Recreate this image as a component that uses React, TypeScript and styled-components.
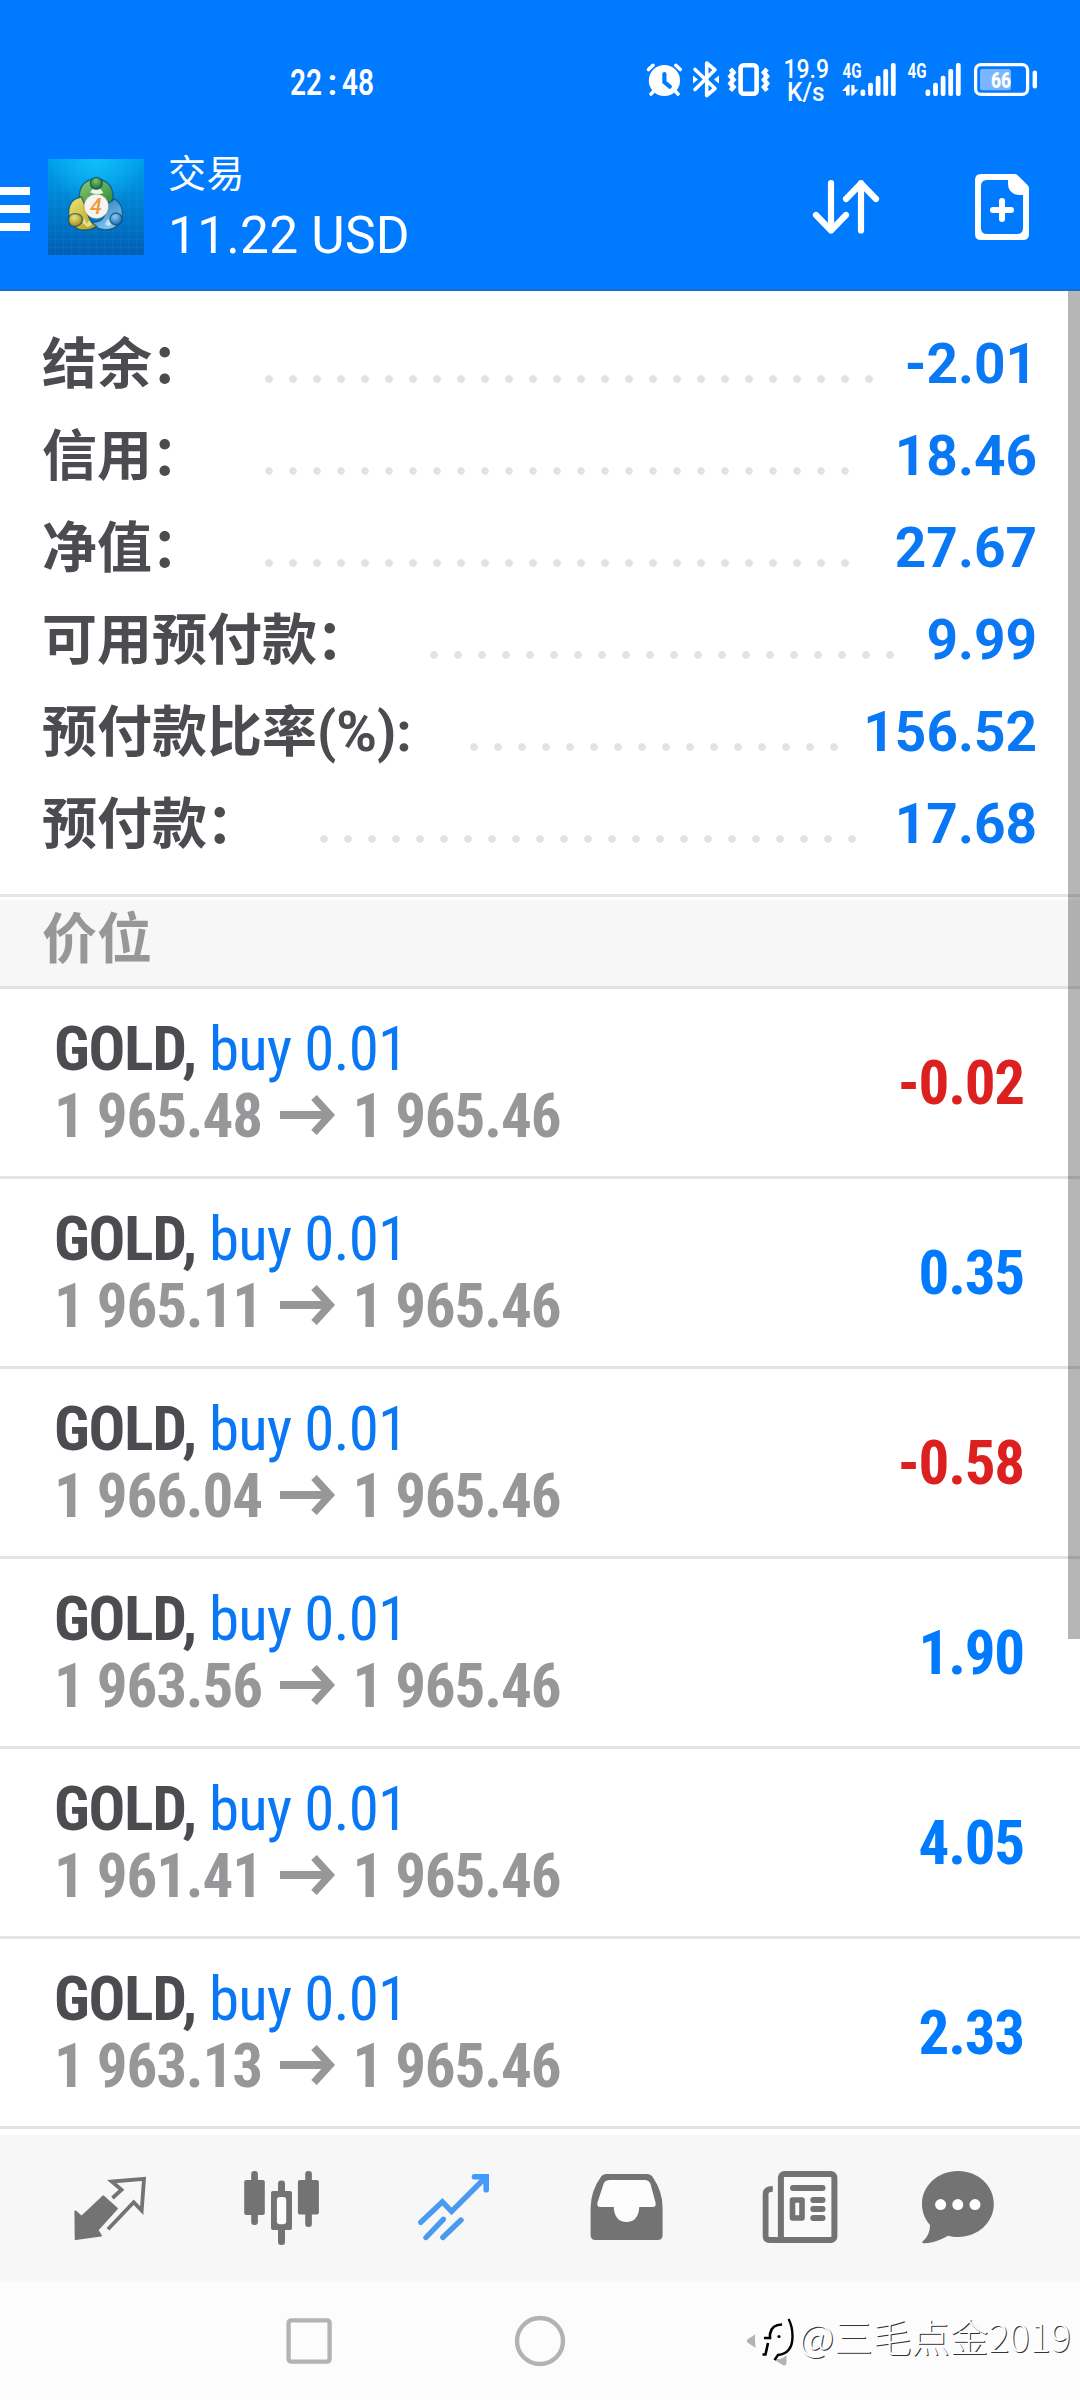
import React from 'react';
import styled, { createGlobalStyle } from 'styled-components';

const BLUE = '#007aff';
const VALUE_BLUE = '#0a78f5';
const ICON_GREY = '#737373';

const GlobalStyle = createGlobalStyle`
  *, *::before, *::after { box-sizing: border-box; }
  body {
    margin: 0;
    background: #fff;
    font-family: Roboto, 'Noto Sans CJK SC', sans-serif;
  }
  svg { display: block; flex: none; overflow: visible; }
`;

const Screen = styled.div`
  position: relative;
  display: flex;
  flex-direction: column;
  width: 1080px;
  height: 2400px;
  overflow: hidden;
  background: #fff;
`;

const TopBar = styled.header`
  flex: none;
  height: 291px;
  background: ${BLUE};
  border-bottom: 2px solid #1a6ccb;
  color: #fff;
`;

const StatusBar = styled.div`
  display: flex;
  height: 150px;
  padding: 58px 43px 0 290px;
`;

const StatusIcons = styled.div`
  display: flex;
  margin-left: auto;
`;

const Spaced = styled.div<{ $gap: number }>`
  margin-left: ${(p) => p.$gap}px;
`;

const AppBar = styled.div`
  display: flex;
  height: 139px;
`;

const MenuButton = styled.div`
  display: flex;
  flex-direction: column;
  gap: 10px;
  width: 30px;
  padding-top: 37px;
`;

const MenuLine = styled.span`
  height: 8px;
  background: #fff;
`;

const Logo = styled.div`
  margin: 9px 0 0 18px;
`;

const Titles = styled.div`
  display: flex;
  flex-direction: column;
  margin-left: 24px;
`;

const Title = styled.div`
  font-size: 38px;
  line-height: 48px;
  height: 56px;
  letter-spacing: 0.5px;
`;

const Subtitle = styled.div`
  font-size: 51.5px;
  line-height: 60px;
  letter-spacing: 0.2px;
`;

const AppActions = styled.div`
  display: flex;
  gap: 95px;
  margin: 24px 50px 0 auto;
`;

const Summary = styled.section`
  display: flex;
  flex-direction: column;
  flex: none;
  height: 606px;
  padding: 27px 43px 0 42px;
  border-bottom: 3px solid #e5e5e5;
`;

const SummaryRow = styled.div`
  display: flex;
  flex: none;
  align-items: baseline;
  height: 92px;
  font-size: 55px;
  line-height: 92px;
  font-weight: 700;
`;

const SummaryLabel = styled.span`
  color: #4b4b50;
  white-space: nowrap;
`;

const WideColon = styled.span`
  margin: 0 1px 0 -1px;
`;

const Leader = styled.span<{ $dots: number }>`
  width: ${(p) => p.$dots * 24}px;
  height: 8px;
  margin-left: 58px;
  background: radial-gradient(circle at 4px 4px, #e2e2e2 3.4px, transparent 4.2px) 0 0 / 24px 8px repeat-x;
`;

const SummaryValue = styled.span`
  margin-left: auto;
  color: ${VALUE_BLUE};
`;

const SectionHeader = styled.div`
  flex: none;
  height: 92px;
  padding-left: 42px;
  border-top: 3px solid #fff;
  border-bottom: 3px solid #e3e3e3;
  background: #f7f7f7;
  color: #97979a;
  font-size: 55px;
  line-height: 79px;
  font-weight: 700;
`;

const Deal = styled.article`
  display: flex;
  flex: none;
  justify-content: space-between;
  align-items: center;
  height: 190px;
  padding: 0 56px 0 54px;
  border-bottom: 3px solid #e3e3e3;
  font-family: 'Roboto Condensed', Roboto, sans-serif;
  font-size: 61px;
  font-stretch: 75%;
  font-weight: 700;
`;

const DealInfo = styled.div`
  display: flex;
  flex-direction: column;
  white-space: nowrap;
  letter-spacing: -1.1px;
`;

const DealLine = styled.div`
  display: flex;
  align-items: center;
  line-height: 66.5px;
  color: #97979a;
`;

const Instrument = styled.span`
  color: #4b4b50;
`;

const Side = styled.span`
  margin-left: 13px;
  color: ${VALUE_BLUE};
  font-weight: 440;
  letter-spacing: -0.9px;
`;

const Profit = styled.span<{ $loss: boolean }>`
  letter-spacing: -1.2px;
  color: ${(p) => (p.$loss ? '#dc2020' : BLUE)};
`;

const ArrowBox = styled.span`
  margin: 0 17.5px 2px 18px;
`;

const TabBar = styled.nav`
  display: flex;
  flex: none;
  height: 147px;
  margin-top: 6px;
  padding: 33px 0 0 72px;
  background: #f7f7f7;
`;

const SystemNav = styled.div`
  display: flex;
  flex: 1;
  align-items: center;
  justify-content: space-between;
  padding: 0 290px 0 284px;
  background: #fcfcfc;
`;

const ScrollThumb = styled.div`
  position: absolute;
  top: 291px;
  right: 0;
  width: 12px;
  height: 1348px;
  background: rgba(0, 0, 0, 0.285);
`;

const Watermark = styled.div`
  position: absolute;
  right: 9px;
  bottom: 33px;
  display: flex;
  align-items: center;
  gap: 3px;
  color: #fff;
  font-family: 'Noto Sans CJK SC', sans-serif;
  font-size: 38.6px;
  line-height: 56px;
  font-weight: 300;
  text-shadow: 1px 1px 0 #333;
`;

const WatermarkName = styled.span`
  padding-bottom: 4px;
`;

const Alarm = () => (
  <svg width="37" height="44" viewBox="646 58 37 44" fill="none" stroke="#fff" strokeLinecap="round">
    <circle cx="664.4" cy="80.5" r="15.6" fill="#fff" stroke="none" />
    <path d="M648.5 69.5l4.5-4.2M680.3 69.5l-4.5-4.2M655 90l-4 4M674 90l4 4" strokeWidth="3.6" />
    <path d="M664.4 74v8l5.4 4.6" stroke={BLUE} strokeWidth="4.2" />
  </svg>
);

const Bluetooth = () => (
  <svg width="28" height="44" viewBox="692 58 28 44" fill="none" stroke="#fff" strokeWidth="3.6" strokeLinecap="round" strokeLinejoin="round">
    <path d="M695 69.5L715 88.5l-8.3 7V63l8.3 6.8L695 89.5" />
    <path d="M693 75.5v8l5-4zM719 75.5v8l-5-4z" fill="#fff" stroke="none" />
  </svg>
);

const Vibrate = () => (
  <svg width="42" height="44" viewBox="728 58 42 44" fill="none" stroke="#fff">
    <rect x="740.6" y="65.2" width="16" height="28.6" rx="3" strokeWidth="4.6" />
    <path d="M730.5 69l3 3.6-3 3.6 3 3.6-3 3.6 3 3.6-3 3.6M767 69l-3 3.6 3 3.6-3 3.6 3 3.6-3 3.6 3 3.6" strokeWidth="4.6" />
  </svg>
);

const Speed = () => (
  <svg width="46" height="44" viewBox="784 58 46 44" fill="#fff" fontFamily="Roboto" fontSize="25" fontWeight="500">
    <text x="783.5" y="78" textLength="45.5" lengthAdjust="spacingAndGlyphs">19.9</text>
    <text x="787" y="100.5" textLength="37.5" lengthAdjust="spacingAndGlyphs">K/s</text>
  </svg>
);

const Signal = ({ left, active }: { left: number; active?: boolean }) => (
  <svg width="56" height="44" viewBox="0 58 56 44" fill="#fff">
    <text x={left} y="77.8" fontFamily="Roboto" fontSize="20.5" fontWeight="700" textLength="19" lengthAdjust="spacingAndGlyphs">4G</text>
    {[89.4, 82.7, 75.7, 69, 63].map((top, i) => (
      <rect key={top} x={19.5 + i * 7.6} y={top} width="4.8" height={96 - top} rx="2" />
    ))}
    {active && <path d="M5 95.5V91H1l6-6.2h1.6v10.7zM10.3 85h3.2v4.4h4.2l-5.8 6.2h-1.6z" />}
  </svg>
);

const Battery = () => (
  <svg width="63" height="44" viewBox="974 58 63 44">
    <rect x="975.6" y="64.6" width="52" height="29.8" rx="5.5" fill="none" stroke="#fff" strokeWidth="3.3" />
    <rect x="980" y="69" width="31" height="21.3" rx="2.5" fill="#7ab5ff" />
    <text x="991" y="87.7" fill="#fff" fontFamily="Roboto" fontSize="22.5" fontWeight="900" textLength="20" lengthAdjust="spacingAndGlyphs">66</text>
    <rect x="1032.6" y="70.6" width="4.4" height="17.8" rx="2" fill="#fff" />
  </svg>
);

const TerminalLogo = () => (
  <svg width="96" height="96" viewBox="0 0 288 288">
    <defs>
      <linearGradient id="sky" x1="0" y1="0" x2="0" y2="1">
        <stop offset="0" stopColor="#009fee" />
        <stop offset="0.5" stopColor="#007fce" />
        <stop offset="1" stopColor="#005fb2" />
      </linearGradient>
      <radialGradient id="glow" cx="0.5" cy="0" r="0.5">
        <stop offset="0" stopColor="#10c0fa" />
        <stop offset="1" stopColor="#10c0fa" stopOpacity="0" />
      </radialGradient>
      <linearGradient id="green" x1="0" y1="0" x2="0.6" y2="1">
        <stop offset="0" stopColor="#8fd07c" />
        <stop offset="1" stopColor="#2d8a35" />
      </linearGradient>
      <linearGradient id="yellow" x1="0" y1="0" x2="0.8" y2="1">
        <stop offset="0" stopColor="#efe67a" />
        <stop offset="1" stopColor="#b8a51c" />
      </linearGradient>
      <linearGradient id="blue" x1="0" y1="0" x2="0.5" y2="1">
        <stop offset="0" stopColor="#2272b8" />
        <stop offset="1" stopColor="#7ec8f0" />
      </linearGradient>
      <radialGradient id="greenHead" cx="0.45" cy="0.3" r="0.7">
        <stop offset="0" stopColor="#7cc46e" />
        <stop offset="1" stopColor="#1b6d27" />
      </radialGradient>
      <radialGradient id="yellowHead" cx="0.4" cy="0.3" r="0.7">
        <stop offset="0" stopColor="#f0e284" />
        <stop offset="1" stopColor="#a48d12" />
      </radialGradient>
      <radialGradient id="blueHead" cx="0.4" cy="0.3" r="0.7">
        <stop offset="0" stopColor="#8ecdf2" />
        <stop offset="1" stopColor="#1d6cb0" />
      </radialGradient>
    </defs>
    <rect width="288" height="288" fill="url(#sky)" />
    <rect width="288" height="288" fill="url(#glow)" />
    <path d="M23 0v288M47 0v288M71 0v288M96 0v288M120 0v288M145 0v288M169 0v288M193 0v288M218 0v288M242 0v288M266 0v288M0 22h288M0 46h288M0 70h288M0 95h288M0 119h288M0 143h288M0 168h288M0 192h288M0 217h288M0 241h288M0 265h288" stroke="#5fc4f5" strokeOpacity="0.16" strokeWidth="1.6" />
    <g stroke="#0b4a6c" strokeOpacity="0.7" strokeWidth="4">
      <path d="M94 112c0-34 22-52 50-52 30 0 52 22 51 52-1 24-10 36-22 42l-50-20-20 2c-6-6-9-14-9-24z" fill="url(#green)" />
      <path d="M148 188c20-4 26-24 30-54l22-14c16 10 24 26 23 46-2 28-22 46-50 46-20 0-34-8-48-20z" fill="url(#blue)" />
      <path d="M100 114c-24 4-38 22-38 48 0 32 22 52 48 51 14 0 26-4 36-11-18-10-28-30-32-56z" fill="url(#yellow)" />
      <path d="M126 100l10-12h20l10 14-20 6z" fill="#eef7e4" stroke="none" />
      <path d="M104 192l6-14 6 16 8-10 8 14-14 6zM170 196l10-16 12 14-10 8z" fill="#fff" fillOpacity="0.55" stroke="none" />
      <circle cx="145" cy="73" r="18" fill="url(#greenHead)" />
      <path d="M62 182c0-12 8-18 20-18 14 0 22 8 21 18-1 12-10 20-22 20-14 0-19-8-19-20z" fill="url(#yellowHead)" />
      <circle cx="204" cy="180" r="18" fill="url(#blueHead)" />
    </g>
    <circle cx="145" cy="142" r="37" fill="#f6f4f2" stroke="#59634b" strokeOpacity="0.6" strokeWidth="2" />
    <text x="144" y="165" textAnchor="middle" fontFamily="Roboto" fontSize="64" fontStyle="italic" fontWeight="500" fill="#f09a3e">4</text>
  </svg>
);

const SortArrows = () => (
  <svg width="66" height="66" viewBox="813 174 66 66" fill="none" stroke="#fff" strokeWidth="6.2" strokeLinecap="round" strokeLinejoin="round">
    <path d="M831 183v47.5M816 215l15 15.5L846 215M861 230.5V183M846 199l15-15.5L876 199" />
  </svg>
);

const NewOrder = () => (
  <svg width="56" height="66" viewBox="974 174 56 66" fill="#fff">
    <path fillRule="evenodd" d="M981 174h34q1.500 0 2.700 1.200l10 10q1.300 1.300 1.300 3V234q0 6-6 6h-42q-6 0-6-6v-54q0-6 6-6zM987 180q-6 0-6 6v42q0 6 6 6h30q6 0 6-6v-33h-4q-11-1-11-11v-4z" />
    <path d="M993 210h18M1002 201v18" stroke="#fff" strokeWidth="6" strokeLinecap="round" />
  </svg>
);

const PriceArrow = () => (
  <svg width="55" height="44" viewBox="0 0 55 44" fill="none" stroke="#97979a">
    <path d="M0 22h49" strokeWidth="8" />
    <path d="M34 4.5L50 22 34 39.5" strokeWidth="7.5" />
  </svg>
);

const QuotesIcon = () => (
  <svg width="75" height="80" viewBox="72 2168 75 80">
    <path d="M75.5 2211.5l6 5.5 21.8-20.5 13.5 12-19.5 21.5 3.5 5.5-25 3.5z" fill={ICON_GREY} stroke={ICON_GREY} strokeWidth="2.2" strokeLinejoin="round" />
    <path d="M112.5 2198l9-8.3-9.7-8.2 32.2-2.7-2.3 31.7-8-8.3-25.7 27" fill="none" stroke={ICON_GREY} strokeWidth="3.8" />
  </svg>
);

const CandlesIcon = () => (
  <svg width="77" height="80" viewBox="243 2168 77 80" fill={ICON_GREY}>
    <rect x="244.2" y="2180" width="20.6" height="35" rx="2" />
    <rect x="251.2" y="2171" width="6.7" height="54" rx="3" />
    <rect x="297.9" y="2180" width="21" height="34.5" rx="2" />
    <rect x="305.2" y="2171" width="6.7" height="56" rx="3" />
    <rect x="278" y="2180.6" width="7" height="64.4" rx="3" />
    <rect x="271" y="2191" width="21" height="39" rx="2" />
    <rect x="276.9" y="2197" width="9.3" height="27.3" rx="3" fill="#fcfcfc" />
  </svg>
);

const TradeIcon = () => (
  <svg width="74" height="80" viewBox="417 2168 74 80" fill="none" stroke="#4a9af0" strokeWidth="5.4" strokeLinecap="round">
    <path d="M420.8 2222.3l21.6-20.4 9.2 9.6L485 2178M443.3 2219.3L426 2237.5M461 2220l-18.2 17.5" />
    <path d="M474.5 2176.7h11.7v13" stroke="#3f9bff" strokeWidth="5.6" />
    <path d="M478 2176h10v11z" fill="#3f9bff" stroke="none" />
  </svg>
);

const HistoryIcon = () => (
  <svg width="74" height="80" viewBox="590 2168 74 80">
    <path d="M606.5 2174H647q4 0 6 3.5 9.5 14 9.6 30V2235q0 5-5 5h-62q-5 0-5-5v-27.5q.5-17 9.9-30 2-3.500 6-3.500z" fill={ICON_GREY} />
    <path d="M610 2180h34.500q4.500 0 6 4l5 18.500q1 4.500-3 4.500h-13.200q-1 15-12.800 15t-12.800-15h-13.200q-4 0-3-4.500l6-18.500q1.500-4 6.500-4z" fill="#fcfcfc" />
  </svg>
);

const NewsIcon = () => (
  <svg width="76" height="80" viewBox="762 2168 76 80" fill="none" stroke={ICON_GREY}>
    <rect x="780.9" y="2174" width="53.5" height="66" rx="3.5" fill="#fafafa" strokeWidth="6" />
    <path d="M772.8 2188.8q-7.2 0-7.2 5.2v42q0 4 4 4h14" strokeWidth="5.8" />
    <path d="M793 2188h29.5M813.3 2200h9.2M813.3 2209h9.2M813.3 2218h9.2" strokeWidth="6" strokeLinecap="round" />
    <rect x="792.5" y="2200" width="9.5" height="18" strokeWidth="5.6" strokeLinejoin="round" />
  </svg>
);

const ChatIcon = () => (
  <svg width="74" height="80" viewBox="921 2168 74 80">
    <path d="M958 2171c20 0 35.8 14.5 35.8 33s-16 33-35.8 33c-3.5 0-7-.4-10-1.2-7 4-14 7-23.5 7.4-2.500 0-3-1-1-2.700 4.500-4 6.500-9.500 6.500-15.500-5-5.500-8-13-8-21 0-18.500 16-33 36-33z" fill={ICON_GREY} />
    <circle cx="940.6" cy="2204.6" r="5.5" fill="#fff" />
    <circle cx="957.8" cy="2204.6" r="5.5" fill="#fff" />
    <circle cx="975" cy="2204.6" r="5.5" fill="#fff" />
  </svg>
);

const RecentsKey = () => (
  <svg width="50" height="52" viewBox="0 0 50 52" fill="none" stroke="#b3b3b3" strokeWidth="4.4">
    <rect x="4.6" y="5.4" width="41" height="41.2" rx="2.5" />
  </svg>
);

const HomeKey = () => (
  <svg width="52" height="52" viewBox="0 0 52 52" fill="none" stroke="#b3b3b3" strokeWidth="4.4">
    <circle cx="26" cy="26" r="23" />
  </svg>
);

const BackKey = () => (
  <svg width="44" height="52" viewBox="0 0 44 52" fill="#b3b3b3" stroke="#b3b3b3" strokeWidth="5" strokeLinejoin="round">
    <path d="M38 4v44L3.5 26z" />
  </svg>
);

const WatermarkLogo = () => (
  <svg width="42" height="52" viewBox="754 2314 42 52">
    <path d="M755 2341c0-14 8-24 22-24 13 0 16.500 11 16.500 23s-5 19-13.500 22h-20c-4-6-5-13-5-21z" fill="#fcfcfc" />
    <path d="M764 2341h6v-4q1.500-9.500 12-9.500M768 2346l-2.500 11.500h-3" fill="none" stroke="#000" strokeWidth="2.6" />
    <path d="M788.5 2322q4 7 4 17.500 0 17-14.500 18.500l-3.500 5" fill="none" stroke="#000" strokeWidth="2.4" />
    <circle cx="779" cy="2339.5" r="1.6" />
  </svg>
);

const summary = [
  { label: '结余', wide: true, dots: 26, value: '-2.01' },
  { label: '信用', wide: true, dots: 25, value: '18.46' },
  { label: '净值', wide: true, dots: 25, value: '27.67' },
  { label: '可用预付款', wide: true, dots: 20, value: '9.99' },
  { label: '预付款比率(%)', wide: false, dots: 16, value: '156.52' },
  { label: '预付款', wide: true, dots: 23, value: '17.68' },
];

const deals = [
  { open: '1 965.48', profit: '-0.02' },
  { open: '1 965.11', profit: '0.35' },
  { open: '1 966.04', profit: '-0.58' },
  { open: '1 963.56', profit: '1.90' },
  { open: '1 961.41', profit: '4.05' },
  { open: '1 963.13', profit: '2.33' },
];

const Clock = () => (
  <svg width="84" height="44" viewBox="290 58 84 44" fill="#fff">
    <text x="290" y="95" fontFamily="Roboto" fontSize="36" fontWeight="600" textLength="32" lengthAdjust="spacingAndGlyphs">22</text>
    <text x="327.5" y="95" fontFamily="Roboto" fontSize="36" fontWeight="600">:</text>
    <text x="342" y="95" fontFamily="Roboto" fontSize="36" fontWeight="600" textLength="32" lengthAdjust="spacingAndGlyphs">48</text>
  </svg>
);

export default function App() {
  return (
    <>
      <GlobalStyle />
      <Screen>
        <TopBar>
          <StatusBar>
            <Clock />
            <StatusIcons>
              <Alarm />
              <Spaced $gap={9}><Bluetooth /></Spaced>
              <Spaced $gap={8}><Vibrate /></Spaced>
              <Spaced $gap={14}><Speed /></Spaced>
              <Spaced $gap={11}><Signal left={1.5} active /></Spaced>
              <Spaced $gap={9}><Signal left={1.5} /></Spaced>
              <Spaced $gap={12}><Battery /></Spaced>
            </StatusIcons>
          </StatusBar>
          <AppBar>
            <MenuButton>
              <MenuLine />
              <MenuLine />
              <MenuLine />
            </MenuButton>
            <Logo><TerminalLogo /></Logo>
            <Titles>
              <Title>交易</Title>
              <Subtitle>11.22 USD</Subtitle>
            </Titles>
            <AppActions>
              <SortArrows />
              <NewOrder />
            </AppActions>
          </AppBar>
        </TopBar>

        <Summary>
          {summary.map((row) => (
            <SummaryRow key={row.label}>
              <SummaryLabel>
                {row.label}
                {row.wide ? <WideColon>：</WideColon> : ':'}
              </SummaryLabel>
              <Leader $dots={row.dots} />
              <SummaryValue>{row.value}</SummaryValue>
            </SummaryRow>
          ))}
        </Summary>

        <SectionHeader>价位</SectionHeader>

        {deals.map((deal) => (
          <Deal key={deal.open}>
            <DealInfo>
              <DealLine>
                <Instrument>GOLD,</Instrument>
                <Side>buy 0.01</Side>
              </DealLine>
              <DealLine>
                {deal.open}
                <ArrowBox><PriceArrow /></ArrowBox>
                1 965.46
              </DealLine>
            </DealInfo>
            <Profit $loss={deal.profit.startsWith('-')}>{deal.profit}</Profit>
          </Deal>
        ))}

        <TabBar>
          <QuotesIcon />
          <Spaced $gap={96}><CandlesIcon /></Spaced>
          <Spaced $gap={97}><TradeIcon /></Spaced>
          <Spaced $gap={99}><HistoryIcon /></Spaced>
          <Spaced $gap={98}><NewsIcon /></Spaced>
          <Spaced $gap={83}><ChatIcon /></Spaced>
        </TabBar>

        <SystemNav>
          <RecentsKey />
          <HomeKey />
          <BackKey />
        </SystemNav>

        <ScrollThumb />
        <Watermark>
          <WatermarkLogo />
          <WatermarkName>@三毛点金2019</WatermarkName>
        </Watermark>
      </Screen>
    </>
  );
}
